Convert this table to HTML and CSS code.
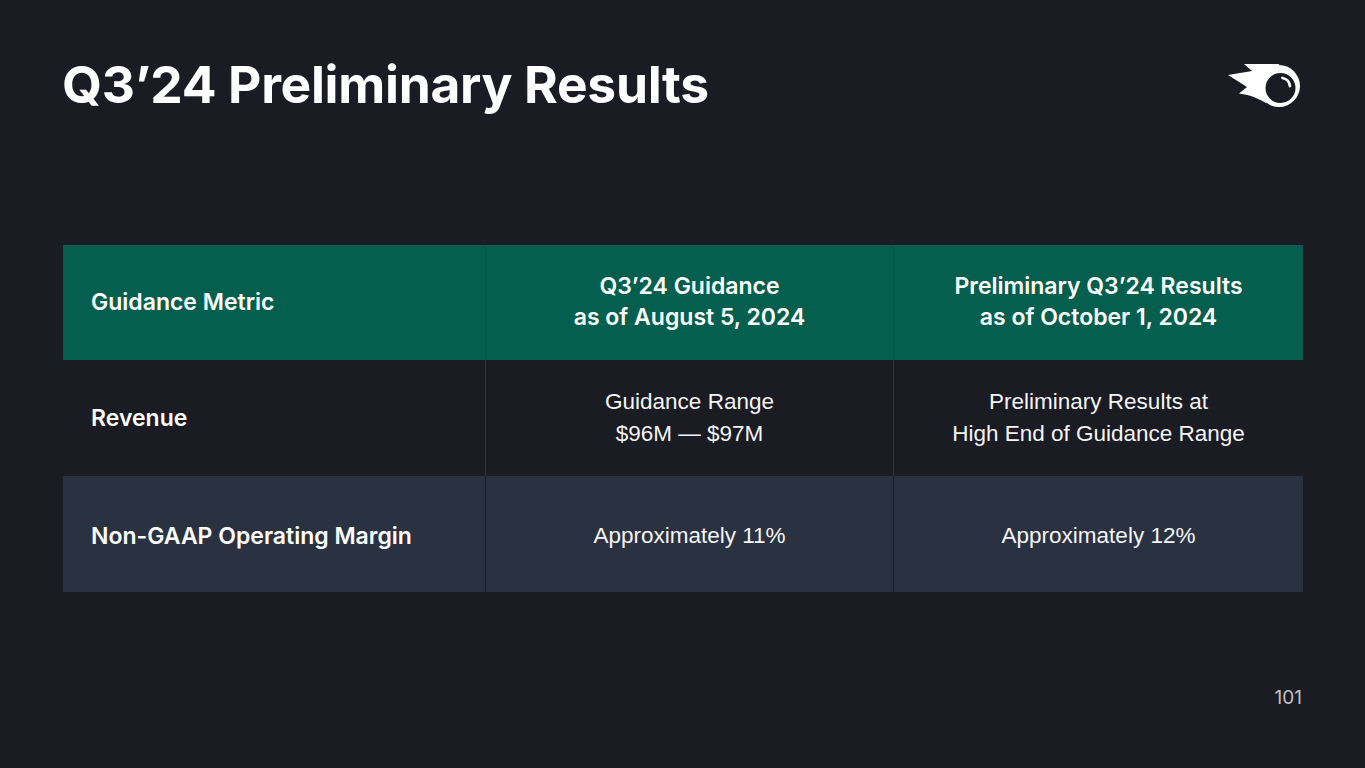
FILE: index.html
```html
<!DOCTYPE html>
<html>
<head>
<meta charset="utf-8">
<link rel="stylesheet" href="styles.css">
</head>
<body>
<div class="slide">
  <header class="top">
    <h1 class="title">Q3’24 Preliminary Results</h1>
    <svg class="logo" viewBox="0 0 74 44" width="74" height="44">
      <path d="M17 0 L52 0 L52 22 L39 39 C32 35 24 31 12 29.5 L20 23 L1 11 L25 7 Z" fill="#fff"/>
      <circle cx="52" cy="22" r="21" fill="#fff"/>
      <circle cx="53.5" cy="24" r="15" fill="#1a1b23"/>
      <path d="M55.5 14 A9.5 9.5 0 0 1 63 22" fill="none" stroke="#fff" stroke-width="2.8" stroke-linecap="round"/>
    </svg>
  </header>
  <div class="table">
    <div class="cell head first">Guidance Metric</div>
    <div class="cell head">Q3’24 Guidance<br>as of August 5, 2024</div>
    <div class="cell head last">Preliminary Q3’24 Results<br>as of October 1, 2024</div>

    <div class="cell dark first">Revenue</div>
    <div class="cell dark val">Guidance Range<br>$96M — $97M</div>
    <div class="cell dark val last">Preliminary Results at<br>High End of Guidance Range</div>

    <div class="cell slate first">Non-GAAP Operating Margin</div>
    <div class="cell slate val">Approximately 11%</div>
    <div class="cell slate val last">Approximately 12%</div>
  </div>
  <div class="page">101</div>
</div>
</body>
</html>
```
FILE: styles.css
```css
html, body {
  margin: 0;
  padding: 0;
  background: #1a1b23;
}
.slide {
  width: 1365px;
  height: 768px;
  box-sizing: border-box;
  padding: 52px 62px 0 62px;
  display: flex;
  flex-direction: column;
  font-family: Inter, "Liberation Sans", sans-serif;
  color: #fff;
}
.top {
  display: flex;
  justify-content: space-between;
  align-items: flex-start;
  height: 193px;
}
.title {
  margin: 0;
  font-size: 51.5px;
  font-weight: 700;
  letter-spacing: -0.3px;
  line-height: 64px;
}
.logo {
  margin-top: 12px;
  margin-right: 2px;
}
.table {
  margin-left: 1px;
  width: 1240px;
  display: grid;
  grid-template-columns: 423px 408px 409px;
  grid-template-rows: 115px 116px 116px;
}
.cell {
  display: flex;
  align-items: center;
  justify-content: center;
  text-align: center;
  font-size: 23px;
  line-height: 32px;
  border-right: 1px solid #1a1b23;
}
.cell.last {
  border-right: none;
}
.cell.first {
  justify-content: flex-start;
  text-align: left;
  padding-left: 28px;
  font-weight: 600;
}
.head {
  background: #045f4e;
  font-weight: 600;
  line-height: 31px;
  padding-bottom: 1px;
  border-right-color: #1d3a33;
}
.dark {
  background: #1a1b23;
  border-right-color: #33363f;
}
.slate {
  background: #2a3242;
  border-right-color: #1a1b23;
  padding-top: 3px;
}
.val {
  font-family: "Liberation Sans", Arial, sans-serif;
  font-weight: 400;
  font-size: 22.5px;
  color: #f4f5f7;
}
.page {
  align-self: flex-end;
  margin-top: 94px;
  margin-right: 1px;
  font-size: 19px;
  color: #bfc1c6;
}
```
